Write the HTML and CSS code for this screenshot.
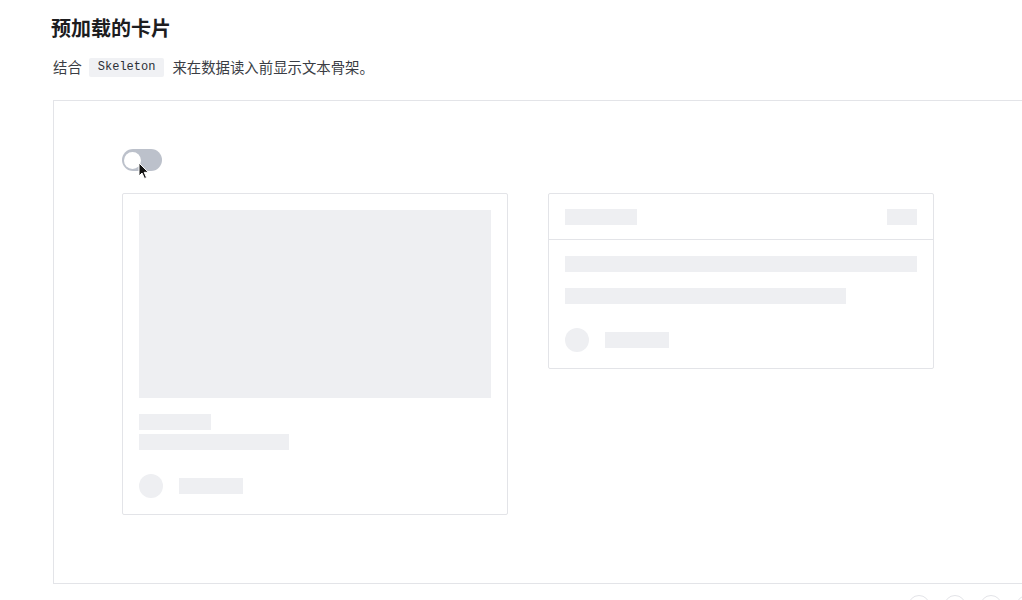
FILE: index.html
```html
<!DOCTYPE html>
<html lang="zh">
<head>
<meta charset="utf-8">
<link rel="stylesheet" href="styles.css">
</head>
<body>
<main class="page">
  <h2 class="title">预加载的卡片</h2>
  <div class="desc"><span>结合</span><code class="tag">Skeleton</code><span>来在数据读入前显示文本骨架。</span></div>
  <section class="demo">
    <div class="toggle-wrap">
      <span class="toggle"><span class="knob"></span></span>
      <svg class="cursor" width="12" height="18" viewBox="0 0 12 18"><path d="M1 1 L1 14 L4 11 L6.5 16.5 L8.5 15.6 L6.2 10.3 L10.4 10.3 Z" fill="#111" stroke="#fff" stroke-width="1"/></svg>
    </div>
    <div class="cards">
      <div class="card card-a">
        <div class="sk sk-img"></div>
        <div class="sk sk-l1"></div>
        <div class="sk sk-l2"></div>
        <div class="meta">
          <span class="sk sk-avatar"></span>
          <span class="sk sk-name"></span>
        </div>
      </div>
      <div class="card card-b">
        <div class="card-head">
          <span class="sk sk-htitle"></span>
          <span class="sk sk-hextra"></span>
        </div>
        <div class="card-body">
          <div class="sk sk-b1"></div>
          <div class="sk sk-b2"></div>
          <div class="meta">
            <span class="sk sk-avatar"></span>
            <span class="sk sk-name"></span>
          </div>
        </div>
      </div>
    </div>
  </section>
  <div class="actions">
    <span class="circle"></span>
    <span class="circle"></span>
    <span class="circle"></span>
    <span class="circle"></span>
  </div>
</main>
</body>
</html>
```
FILE: styles.css
```css
html, body {
  margin: 0;
  padding: 0;
  background: #fff;
  overflow: hidden;
  height: 600px;
}
body {
  font-family: "Noto Sans CJK SC", "Noto Sans", sans-serif;
  color: #1f2329;
}
.page {
  padding: 14px 0 0 51px;
  width: 1100px;
}
.title {
  margin: 0;
  font-size: 20px;
  line-height: 28px;
  font-weight: 600;
  color: #1d1d1f;
}
.desc {
  display: flex;
  align-items: center;
  height: 20px;
  margin: 15px 0 0 2px;
  font-size: 14.4px;
  line-height: 20px;
  color: #3a3d44;
}
.tag {
  display: block;
  font-family: "Liberation Mono", "DejaVu Sans Mono", monospace;
  font-size: 12px;
  line-height: 19px;
  padding: 0 9px;
  margin: 0 8px 0 7px;
  background: #f0f1f4;
  border-radius: 2px;
  color: #2b2f36;
}
.demo {
  margin: 23px 0 0 2px;
  width: 1000px;
  height: 484px;
  border: 1px solid #e3e4e8;
  box-sizing: border-box;
  padding: 48px 0 0 68px;
}
.toggle-wrap {
  position: relative;
  height: 22px;
  width: 40px;
}
.toggle {
  display: flex;
  align-items: center;
  width: 40px;
  height: 22px;
  border-radius: 11px;
  background: #bcc1cb;
  padding: 0 2px;
  box-sizing: border-box;
}
.knob {
  width: 17px;
  height: 17px;
  border-radius: 50%;
  background: #fff;
}
.cursor {
  position: absolute;
  left: 16px;
  top: 13px;
}
.cards {
  display: flex;
  align-items: flex-start;
  gap: 40px;
  margin-top: 22px;
}
.card {
  width: 386px;
  box-sizing: border-box;
  border: 1px solid #e3e4e8;
  border-radius: 2px;
  background: #fff;
}
.card-a {
  padding: 16px;
}
.sk {
  display: block;
  background: #eeeff2;
  height: 16px;
}
.sk-img {
  height: 188px;
}
.sk-l1 {
  width: 72px;
  margin-top: 16px;
}
.sk-l2 {
  width: 150px;
  margin-top: 4px;
}
.meta {
  display: flex;
  align-items: center;
  gap: 16px;
  margin-top: 24px;
}
.sk-avatar {
  width: 24px;
  height: 24px;
  border-radius: 50%;
}
.sk-name {
  width: 64px;
}
.card-head {
  display: flex;
  justify-content: space-between;
  padding: 15px 16px 14px;
  border-bottom: 1px solid #e3e4e8;
}
.sk-htitle {
  width: 72px;
}
.sk-hextra {
  width: 30px;
}
.card-body {
  padding: 16px;
}
.sk-b2 {
  width: 281px;
  margin-top: 16px;
}
.actions {
  display: flex;
  gap: 14px;
  margin: 11px 0 0 857px;
}
.circle {
  width: 22px;
  height: 22px;
  border-radius: 50%;
  border: 1px solid #e3e4e8;
  box-sizing: border-box;
}
```
